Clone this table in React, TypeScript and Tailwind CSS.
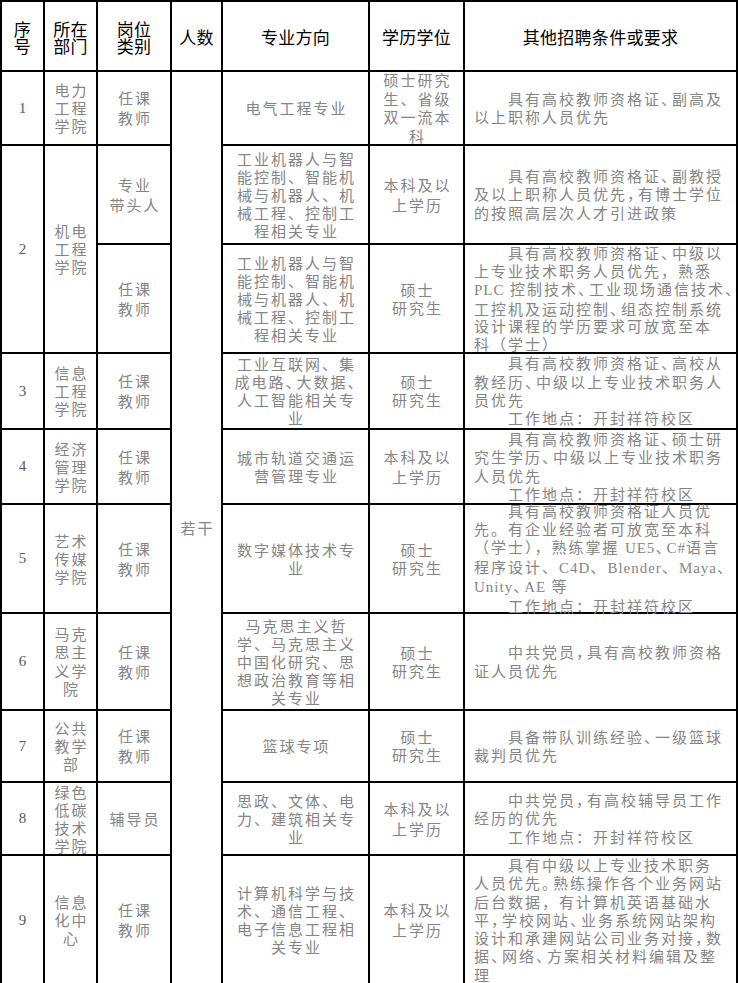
import type React from "react"

// ^x marks a narrow (half-width) punctuation mark, latin runs get their own font
function Txt({ s }: { s: string }) {
  const out: React.ReactNode[] = []
  let buf = ""
  let i = 0
  const flush = () => {
    if (buf) {
      out.push(<span key={"t" + i}>{buf}</span>)
      buf = ""
    }
  }
  while (i < s.length) {
    const c = s[i]
    if (c === "^") {
      flush()
      out.push(
        <span key={"n" + i} className="tracking-[-4px]">
          {s[i + 1]}
        </span>
      )
      i += 2
      continue
    }
    const m = s.slice(i).match(/^[A-Za-z0-9#]+/)
    if (m) {
      flush()
      out.push(
        <span key={"l" + i} className="tracking-[1px] text-[15px] [font-family:'Liberation_Serif',serif]">
          {m[0]}
        </span>
      )
      i += m[0].length
      continue
    }
    buf += c
    i++
  }
  flush()
  return <>{out}</>
}

function Head({ lines }: { lines: string[] }) {
  return (
    <div className="flex flex-col items-center justify-center border-r-2 border-b-2 border-black pt-[1px] text-[17px] leading-[17px] tracking-[0.3px] text-black">
      {lines.map((l) => (
        <div key={l} className="whitespace-pre">
          {l}
        </div>
      ))}
    </div>
  )
}

function Cell({
  lines,
  lh = "leading-[18px]",
  extra = "",
}: {
  lines: string[]
  lh?: string
  extra?: string
}) {
  return (
    <div
      className={`flex flex-col items-center justify-center border-r-2 border-b-2 border-black pl-[2px] text-[15px] tracking-[2px] text-[#858585] ${lh} ${extra}`}
    >
      {lines.map((l, i) => (
        <div key={i} className="whitespace-pre">
          <Txt s={l} />
        </div>
      ))}
    </div>
  )
}

function Cond({ lines, lh = "leading-[18.3px]" }: { lines: string[]; lh?: string }) {
  return (
    <div
      className={`flex flex-col items-start justify-center border-r-2 border-b-2 border-black pl-[9px] text-[15px] tracking-[2px] text-[#858585] ${lh}`}
    >
      {lines.map((l, i) => (
        <div key={i} className="whitespace-pre">
          <Txt s={l} />
        </div>
      ))}
    </div>
  )
}

function Num({ n, extra = "", color = "text-[#5a5a5a]" }: { n: string; extra?: string; color?: string }) {
  return (
    <div
      className={`flex items-center justify-center border-r-2 border-b-2 border-black text-[15px] [font-family:'Liberation_Serif',serif] ${color} ${extra}`}
    >
      {n}
    </div>
  )
}

export default function App() {
  return (
    <div className="w-[738px] h-[983px] overflow-hidden bg-white [font-family:'Noto_Sans_CJK_SC',sans-serif]">
      <div className="grid grid-cols-[43px_53px_74px_51px_147px_95px_273px] grid-rows-[70px_74px_99px_109px_76px_75px_109px_97px_72px_73px_130px] border-l-2 border-t-2 border-black">
        {/* header */}
        <Head lines={["序", "号"]} />
        <Head lines={["所在", "部门"]} />
        <Head lines={["岗位", "类别"]} />
        <Head lines={["人数"]} />
        <Head lines={["专业方向"]} />
        <Head lines={["学历学位"]} />
        <Head lines={["其他招聘条件或要求"]} />

        {/* 1 */}
        <Num n="1" color="text-[#5b4a8e]" />
        <Cell lines={["电力", "工程", "学院"]} />
        <Cell lines={["任课", "教师"]} lh="leading-[20px]" />
        <Cell lines={["若干"]} extra="row-span-10" />
        <Cell lines={["电气工程专业"]} />
        <Cell lines={["硕士研究", "生、省级", "双一流本", "科"]} lh="leading-[18.5px]" />
        <Cond lines={["　　具有高校教师资格证^、副高及", "以上职称人员优先"]} />

        {/* 2 */}
        <Num n="2" extra="row-span-2" />
        <Cell lines={["机电", "工程", "学院"]} extra="row-span-2" />
        <Cell lines={["专业", "带头人"]} lh="leading-[20px]" />
        <Cell lines={["工业机器人与智", "能控制、智能机", "械与机器人、机", "械工程、控制工", "程相关专业"]} />
        <Cell lines={["本科及以", "上学历"]} lh="leading-[20px]" />
        <Cond
          lines={["　　具有高校教师资格证^、副教授", "及以上职称人员优先^，有博士学位", "的按照高层次人才引进政策"]}
        />

        <Cell lines={["任课", "教师"]} lh="leading-[20px]" />
        <Cell lines={["工业机器人与智", "能控制、智能机", "械与机器人、机", "械工程、控制工", "程相关专业"]} />
        <Cell lines={["硕士", "研究生"]} />
        <Cond
          lh="leading-[17.8px]"
          lines={[
            "　　具有高校教师资格证^、中级以",
            "上专业技术职务人员优先，熟悉",
            "PLC 控制技术^、工业现场通信技术^、",
            "工控机及运动控制^、组态控制系统",
            "设计课程的学历要求可放宽至本",
            "科（学士）",
          ]}
        />

        {/* 3 */}
        <Num n="3" />
        <Cell lines={["信息", "工程", "学院"]} />
        <Cell lines={["任课", "教师"]} lh="leading-[20px]" />
        <Cell lines={["工业互联网、集", "成电路^、大数据^、", "人工智能相关专", "业"]} />
        <Cell lines={["硕士", "研究生"]} />
        <Cond
          lines={["　　具有高校教师资格证^、高校从", "教经历^、中级以上专业技术职务人", "员优先", "　　工作地点：开封祥符校区"]}
        />

        {/* 4 */}
        <Num n="4" />
        <Cell lines={["经济", "管理", "学院"]} />
        <Cell lines={["任课", "教师"]} lh="leading-[20px]" />
        <Cell lines={["城市轨道交通运", "营管理专业"]} />
        <Cell lines={["本科及以", "上学历"]} lh="leading-[20px]" />
        <Cond
          lines={["　　具有高校教师资格证^、硕士研", "究生学历^、中级以上专业技术职务", "人员优先", "　　工作地点：开封祥符校区"]}
        />

        {/* 5 */}
        <Num n="5" />
        <Cell lines={["艺术", "传媒", "学院"]} />
        <Cell lines={["任课", "教师"]} lh="leading-[20px]" />
        <Cell lines={["数字媒体技术专", "业"]} />
        <Cell lines={["硕士", "研究生"]} />
        <Cond
          lh="leading-[17.8px]"
          lines={[
            "　　具有高校教师资格证人员优",
            "先。有企业经验者可放宽至本科",
            "（学士），熟练掌握 UE5^、C#语言",
            "程序设计、C4D、Blender、Maya^、",
            "Unity^、AE 等",
            "　　工作地点：开封祥符校区",
          ]}
        />

        {/* 6 */}
        <Num n="6" />
        <Cell lines={["马克", "思主", "义学", "院"]} lh="leading-[18.3px]" />
        <Cell lines={["任课", "教师"]} lh="leading-[20px]" />
        <Cell lines={["马克思主义哲", "学、马克思主义", "中国化研究、思", "想政治教育等相", "关专业"]} />
        <Cell lines={["硕士", "研究生"]} />
        <Cond lines={["　　中共党员^，具有高校教师资格", "证人员优先"]} />

        {/* 7 */}
        <Num n="7" />
        <Cell lines={["公共", "教学", "部"]} />
        <Cell lines={["任课", "教师"]} lh="leading-[20px]" />
        <Cell lines={["篮球专项"]} />
        <Cell lines={["硕士", "研究生"]} />
        <Cond lines={["　　具备带队训练经验^、一级篮球", "裁判员优先"]} />

        {/* 8 */}
        <Num n="8" />
        <Cell lines={["绿色", "低碳", "技术", "学院"]} />
        <Cell lines={["辅导员"]} />
        <Cell lines={["思政、文体、电", "力、建筑相关专", "业"]} />
        <Cell lines={["本科及以", "上学历"]} lh="leading-[20px]" />
        <Cond lines={["　　中共党员^，有高校辅导员工作", "经历的优先", "　　工作地点：开封祥符校区"]} />

        {/* 9 */}
        <Num n="9" />
        <Cell lines={["信息", "化中", "心"]} />
        <Cell lines={["任课", "教师"]} lh="leading-[20px]" />
        <Cell lines={["计算机科学与技", "术、通信工程、", "电子信息工程相", "关专业"]} />
        <Cell lines={["本科及以", "上学历"]} lh="leading-[20px]" />
        <Cond
          lines={[
            "　　具有中级以上专业技术职务",
            "人员优先^。熟练操作各个业务网站",
            "后台数据，有计算机英语基础水",
            "平^，学校网站^、业务系统网站架构",
            "设计和承建网站公司业务对接^，数",
            "据^、网络^、方案相关材料编辑及整",
            "理",
          ]}
        />
      </div>
    </div>
  )
}
